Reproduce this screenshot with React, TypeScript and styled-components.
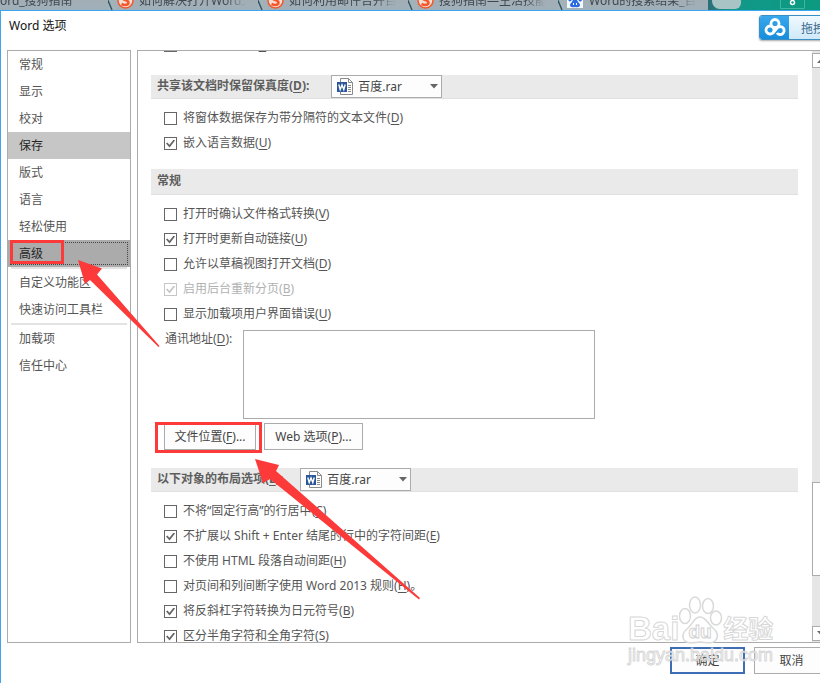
import React from "react";
import styled, { createGlobalStyle } from "styled-components";

const GlobalStyle = createGlobalStyle`
  * { box-sizing: border-box; }
  body {
    margin: 0;
    overflow: hidden;
    background: #fff;
  }
  body, button, select, textarea {
    font-family: "Noto Sans", "Noto Sans CJK SC", sans-serif;
    font-size: 12px;
    color: #555;
  }
  u { text-underline-offset: 2px; }
`;

const Screen = styled.div`
  position: relative;
  display: flex;
  flex-direction: column;
  height: 100vh;
  overflow: hidden;
`;

/* ---------- browser tabs behind the dialog ---------- */

const TabStrip = styled.div`
  display: flex;
  flex: none;
  height: 10px;
  overflow: hidden;
  background: linear-gradient(90deg, #2b6e78, #12988a 20%, #0b9a80);
  background-size: 112px 100%;
  background-position: right;
  background-repeat: no-repeat;
  background-color: #a3b1b9;
`;

const Tab = styled.div<{ $first?: boolean }>`
  display: flex;
  flex: none;
  align-items: flex-start;
  width: ${(p) => (p.$first ? 108 : 150)}px;
  height: 10px;
  background: linear-gradient(#a3aeb5, #9fb0ba);
`;

const TabTitle = styled.span<{ $first?: boolean }>`
  flex: 1;
  min-width: 0;
  height: 18px;
  margin: -8px ${(p) => (p.$first ? 0 : 12)}px 0 ${(p) => (p.$first ? -11 : 5)}px;
  overflow: hidden;
  line-height: 18px;
  white-space: nowrap;
  color: #3f484e;
  mask-image: linear-gradient(90deg, #000 80%, transparent);
`;

const TabIcon = styled.svg`
  flex: none;
  width: 17px;
  height: 17px;
  margin-top: -8px;
`;

const TabEdge = styled.svg`
  flex: none;
  width: 9px;
  height: 10px;
`;

const NewTab = styled.div`
  flex: none;
  width: 29px;
  height: 9px;
  margin-left: 4px;
  background: #a9c4c5;
  border-radius: 0 0 6px 8px;
`;

const Profile = styled.svg`
  flex: none;
  width: 25px;
  height: 9px;
  margin-left: 39px;
`;

/* ---------- dialog ---------- */

const Dialog = styled.main`
  position: relative;
  display: flex;
  flex: 1;
  flex-direction: column;
  width: calc(100% + 22px);
  min-height: 0;
  border-top: 1px solid #3ea6ee;
  border-left: 1px solid #3ea6ee;
  background: #fff;
`;

const TitleBar = styled.header`
  display: flex;
  flex: none;
  align-items: flex-start;
  justify-content: space-between;
  height: 39px;
  padding: 4px 0 0 8px;
`;

const Title = styled.h1`
  margin: 0;
  font-size: 12px;
  font-weight: 400;
  line-height: 21px;
  color: #111;
`;

const UploadButton = styled.button`
  display: flex;
  width: 83px;
  height: 25px;
  padding: 0;
  overflow: hidden;
  border: 1px solid #3a8fc4;
  border-radius: 3px;
  background: linear-gradient(#f0f9fe, #cfe9f9);
  box-shadow: 0 1px 2px #aaa;
  color: #39698c;
  line-height: 25px;
  white-space: nowrap;
`;

const UploadIcon = styled.svg`
  flex: none;
  width: 29px;
  height: 23px;
  margin-right: 12px;
  background: linear-gradient(#39a8ec, #168ddc);
`;

const Panels = styled.div`
  display: flex;
  flex: 1;
  gap: 6px;
  min-height: 0;
  padding: 0 11px 0 6px;
`;

const Sidebar = styled.nav`
  flex: none;
  width: 124px;
  border: 1px solid #ababab;
`;

const NavItem = styled.button<{ $state?: "hover" | "selected" }>`
  display: block;
  position: relative;
  width: 100%;
  height: 27px;
  padding: 0 0 0 11px;
  border: 0;
  background: ${(p) =>
    p.$state === "selected" ? "#ababab" : p.$state === "hover" ? "#c6c6c6" : "transparent"};
  color: ${(p) => (p.$state ? "#262626" : "#555")};
  line-height: 27px;
  text-align: left;
  white-space: nowrap;
  ${(p) => p.$state === "selected" && "outline: 1px dotted #444; outline-offset: -3px;"}
`;

const NavRule = styled.hr`
  height: 2px;
  margin: 0 3px;
  border: 0;
  background: #e3e3e3;
`;

const Pane = styled.section`
  display: flex;
  flex: 1;
  min-width: 0;
  border: 1px solid #ababab;
`;

const Viewport = styled.div`
  flex: 1;
  min-width: 0;
  overflow: hidden;
  padding: 0 14px 0 13px;
`;

const Scrolled = styled.div`
  margin-top: -18px;
`;

const SectionHead = styled.div<{ $tall?: boolean; $gap: number }>`
  display: flex;
  align-items: center;
  height: ${(p) => (p.$tall ? 26 : 24)}px;
  margin: ${(p) => p.$gap}px 0 7px;
  padding-left: 6px;
  border-bottom: 1px solid #e0e0e0;
  background: #eaeaea;
  color: #5e5e5e;
  font-weight: 700;
  line-height: 18px;
  white-space: nowrap;
`;

const HeadText = styled.label`
  padding-bottom: 2px;
`;

const Picker = styled.span<{ $space: number }>`
  position: relative;
  width: 111px;
  height: 23px;
  margin-left: ${(p) => p.$space}px;
`;

const Select = styled.select`
  appearance: none;
  width: 100%;
  height: 100%;
  padding: 0 20px 0 26px;
  border: 1px solid #ababab;
  border-radius: 0;
  background: #fdfdfd;
  color: #444;
`;

const DocIcon = styled.svg`
  position: absolute;
  top: 3px;
  left: 6px;
  width: 16px;
  height: 17px;
`;

const Caret = styled.svg`
  position: absolute;
  top: 9px;
  right: 4px;
  width: 8px;
  height: 5px;
`;

const Option = styled.label<{ $disabled?: boolean }>`
  display: flex;
  align-items: center;
  gap: 6px;
  height: 25px;
  padding-left: 13px;
  color: ${(p) => (p.$disabled ? "#b1b1b1" : "#555")};
  line-height: 18px;
  white-space: nowrap;
`;

const OptionText = styled.span`
  padding-bottom: 2px;
`;

const Box = styled.input`
  appearance: none;
  display: grid;
  place-items: center;
  width: 13px;
  height: 13px;
  margin: 0;
  border: 1px solid #666;
  background: #fff;
  &:disabled { border-color: #c6c6c6; }
  &:checked::after {
    content: "";
    width: 9px;
    height: 8px;
    background: #666;
    clip-path: polygon(0 50%, 15% 38%, 38% 65%, 85% 0, 100% 12%, 40% 100%);
  }
  &:disabled:checked::after { background: #c6c6c6; }
`;

const AddressRow = styled.div`
  display: flex;
  gap: 11px;
  padding: 3px 0 4px 14px;
`;

const AddressLabel = styled.label`
  line-height: 18px;
  white-space: nowrap;
`;

const Address = styled.textarea`
  width: 352px;
  height: 89px;
  border: 1px solid #ababab;
  background: #fff;
  resize: none;
`;

const ButtonRow = styled.div`
  display: flex;
  gap: 8px;
  padding-left: 13px;
`;

const Button = styled.button<{ $width: number; $primary?: boolean }>`
  position: relative;
  width: ${(p) => p.$width}px;
  height: 27px;
  padding: 0 0 1px;
  border: ${(p) => (p.$primary ? "2px solid #3d6db5" : "1px solid #ababab")};
  background: #fdfdfd;
  color: #444;
  white-space: nowrap;
`;

const ScrollBar = styled.div`
  display: flex;
  flex: none;
  flex-direction: column;
  width: 18px;
  padding: 2px 0 1px;
  background: #e6e6e6;
`;

const ScrollButton = styled.button`
  display: grid;
  place-items: center;
  flex: none;
  height: 15px;
  padding: 0;
  border: 1px solid #ababab;
  background: #fff;
`;

const Space = styled.div<{ $grow: number }>`
  flex: ${(p) => p.$grow};
`;

const Thumb = styled.div`
  flex: 92;
  border: 1px solid #ababab;
  background: #fff;
`;

const Footer = styled.footer`
  display: flex;
  flex: none;
  justify-content: flex-end;
  gap: 9px;
  height: 40px;
  padding: 4px 13px 0 0;
`;

/* ---------- annotations lying over the dialog ---------- */

const NavMark = styled.span`
  position: absolute;
  top: 0;
  left: 2px;
  width: 54px;
  height: 24px;
  border: 3px solid #fc3a3a;
`;

const ButtonMark = styled.span`
  position: absolute;
  top: -2px;
  left: -10px;
  width: 107px;
  height: 31px;
  border: 3px solid #fc3a3a;
`;

const Arrows = styled.svg`
  position: absolute;
  top: 0;
  left: 0;
  width: 430px;
  height: 610px;
  pointer-events: none;
`;

const Watermark = styled.div`
  position: absolute;
  right: 44px;
  bottom: 18px;
  width: 148px;
  color: rgba(255, 255, 255, 0.75);
  font-family: "Liberation Sans", "Noto Sans CJK SC", sans-serif;
  font-weight: 700;
  white-space: nowrap;
  -webkit-text-stroke: 1px rgba(205, 205, 205, 0.8);
  pointer-events: none;
`;

const Brand = styled.div`
  display: flex;
  align-items: flex-end;
  height: 50px;
  font-size: 33px;
  line-height: 34px;
`;

const BrandCn = styled.span`
  font-size: 25px;
`;

const Paw = styled.svg`
  flex: none;
  width: 44px;
  height: 50px;
`;

const Site = styled.div`
  font-size: 18px;
  font-weight: 400;
  line-height: 19px;
`;

const SogouIcon = () => (
  <TabIcon viewBox="0 0 17 17">
    <circle cx="8.500" cy="8.500" r="7.500" fill="#f5ded6" stroke="#f4572a" strokeWidth="1.500" />
    <path d="M12 5Q8 3 5.500 5.200Q5 7 8.500 8Q12.500 9.500 11 12Q8.500 14 4.500 12" fill="none" stroke="#f4572a" strokeWidth="2.600" />
  </TabIcon>
);

const PawIcon = () => (
  <TabIcon viewBox="0 0 17 17">
    <path fill="#f4f7fb" d="M0 0h16v16H0z" />
    <g fill="#2d6be0">
      <ellipse cx="3" cy="7" rx="1.800" ry="2.400" />
      <ellipse cx="6" cy="3.500" rx="1.800" ry="2.400" />
      <ellipse cx="10" cy="3.500" rx="1.800" ry="2.400" />
      <ellipse cx="13.200" cy="7.200" rx="1.800" ry="2.400" />
      <path d="M8 7Q10 7 11 10Q14 12 12.500 14.500Q11 15.800 8 15Q5 15.800 3.500 14.500Q2 12 5 10Q6 7 8 7Z" />
    </g>
    <path d="M6.500 11v2M9.500 11v2" stroke="#fff" />
  </TabIcon>
);

const Edge = () => (
  <TabEdge viewBox="0 0 9 10">
    <path fill="#a3b1b9" d="M0 0h9v10H0z" />
    <path d="M0 0L4 10" stroke="#d0dade" />
    <path d="M-1 -2L4 10" stroke="#2a5361" strokeWidth="1.400" />
  </TabEdge>
);

const tabs = [
  { title: "如何解决打开Word文" },
  { title: "如何利用邮件合并自" },
  { title: "搜狗指南—生活技能" },
  { title: "Word的搜索结果_百", paw: true },
];

type Nav = { text: string; state?: "hover" | "selected"; rule?: boolean };
const nav: Nav[] = [
  { text: "常规" },
  { text: "显示" },
  { text: "校对" },
  { text: "保存", state: "hover" },
  { text: "版式" },
  { text: "语言" },
  { text: "轻松使用" },
  { text: "高级", state: "selected", rule: true },
  { text: "自定义功能区" },
  { text: "快速访问工具栏", rule: true },
  { text: "加载项" },
  { text: "信任中心" },
];

type CheckProps = { text: string; k: string; tail?: string; on?: boolean; disabled?: boolean };
const Check = ({ text, k, tail, on, disabled }: CheckProps) => (
  <Option $disabled={disabled}>
    <Box type="checkbox" defaultChecked={on} disabled={disabled} />
    <OptionText>
      {text}(<u>{k}</u>){tail}
    </OptionText>
  </Option>
);

const DocPicker = ({ id, space }: { id: string; space: number }) => (
  <Picker $space={space}>
    <Select id={id} defaultValue="rar">
      <option value="rar">百度.rar</option>
    </Select>
    <DocIcon viewBox="0 0 16 17">
      <path d="M3.500 .5h8l4 4v12h-12z" fill="#fff" stroke="#8a8a8a" />
      <path d="M11.500 .5v4h4" fill="none" stroke="#8a8a8a" />
      <path d="M11 7.500h3M11 9.500h3M11 11.500h3M11 13.500h3" stroke="#8a8a8a" />
      <path d="M0 4h10v10H0z" fill="#2b579a" />
      <path d="M1.800 6.500L3.200 11.500L5 7L6.800 11.500L8.200 6.500" fill="none" stroke="#fff" strokeWidth="1.400" />
    </DocIcon>
    <Caret viewBox="0 0 8 5">
      <path d="M0 0h8L4 4.500z" fill="#666" />
    </Caret>
  </Picker>
);

export default function App() {
  return (
    <Screen>
      <GlobalStyle />
      <TabStrip>
        <Tab $first>
          <TabTitle $first>Word_搜狗指南</TabTitle>
        </Tab>
        {tabs.map((t) => (
          <Tab key={t.title}>
            <Edge />
            {t.paw ? <PawIcon /> : <SogouIcon />}
            <TabTitle>{t.title}</TabTitle>
          </Tab>
        ))}
        <NewTab />
        <Profile viewBox="0 0 25 9">
          <path d="M.5 0v8.500h24V0" fill="none" stroke="#3fb5a2" />
          <circle cx="12.500" cy="2.500" r="2" fill="none" stroke="#fff" strokeWidth="1.500" />
        </Profile>
      </TabStrip>

      <Dialog>
        <TitleBar>
          <Title>Word 选项</Title>
          <UploadButton>
            <UploadIcon viewBox="0 0 29 23">
              <g fill="none" stroke="#fff" strokeWidth="2.800">
                <circle cx="15" cy="7.500" r="4" />
                <circle cx="10" cy="14" r="4" />
                <path d="M12.500 17.500L17.500 11.500A4 4 0 1 1 17 17" />
              </g>
            </UploadIcon>
            拖拽上传
          </UploadButton>
        </TitleBar>

        <Panels>
          <Sidebar>
            {nav.map((n) => (
              <React.Fragment key={n.text}>
                <NavItem $state={n.state}>
                  {n.text}
                  {n.state === "selected" && <NavMark />}
                </NavItem>
                {n.rule && <NavRule />}
              </React.Fragment>
            ))}
          </Sidebar>

          <Pane>
            <Viewport>
              <Scrolled>
                <Check text="允许后台保存" k="A" on />
                <SectionHead $gap={17}>
                  <HeadText htmlFor="fidelity">
                    共享该文档时保留保真度(<u>D</u>):
                  </HeadText>
                  <DocPicker id="fidelity" space={22} />
                </SectionHead>
                <Check text="将窗体数据保存为带分隔符的文本文件" k="D" />
                <Check text="嵌入语言数据" k="U" on />

                <SectionHead $tall $gap={13}>
                  <HeadText as="span">常规</HeadText>
                </SectionHead>
                <Check text="打开时确认文件格式转换" k="V" />
                <Check text="打开时更新自动链接" k="U" on />
                <Check text="允许以草稿视图打开文档" k="D" />
                <Check text="启用后台重新分页" k="B" on disabled />
                <Check text="显示加载项用户界面错误" k="U" />
                <AddressRow>
                  <AddressLabel htmlFor="address">
                    通讯地址(<u>D</u>):
                  </AddressLabel>
                  <Address id="address" />
                </AddressRow>
                <ButtonRow>
                  <Button $width={92}>
                    文件位置(<u>F</u>)...
                    <ButtonMark />
                  </Button>
                  <Button $width={99}>
                    Web 选项(<u>P</u>)...
                  </Button>
                </ButtonRow>

                <SectionHead $gap={18}>
                  <HeadText htmlFor="layout">
                    以下对象的布局选项(<u>L</u>):
                  </HeadText>
                  <DocPicker id="layout" space={17} />
                </SectionHead>
                <Check text="不将“固定行高”的行居中" k="C" />
                <Check text="不扩展以 Shift + Enter 结尾的行中的字符间距" k="E" on />
                <Check text="不使用 HTML 段落自动间距" k="H" />
                <Check text="对页间和列间断字使用 Word 2013 规则" k="H" tail="。" />
                <Check text="将反斜杠字符转换为日元符号" k="B" on />
                <Check text="区分半角字符和全角字符" k="S" on />
              </Scrolled>
            </Viewport>
            <ScrollBar>
              <ScrollButton aria-label="向上滚动">
                <svg width="9" height="5">
                  <path d="M0 5L4.500 0L9 5z" fill="#666" />
                </svg>
              </ScrollButton>
              <Space $grow={415} />
              <Thumb />
              <Space $grow={50} />
              <ScrollButton aria-label="向下滚动">
                <svg width="9" height="5">
                  <path d="M0 0L4.500 5L9 0z" fill="#666" />
                </svg>
              </ScrollButton>
            </ScrollBar>
          </Pane>
        </Panels>

        <Footer>
          <Button $width={75} $primary>确定</Button>
          <Button $width={75}>取消</Button>
        </Footer>
      </Dialog>

      <Arrows viewBox="0 0 430 610">
        <g fill="#fc3a3a">
          <path d="M78 260L102 268.500L97 274.500L159.500 346L158.500 347L90 280L85 284z" />
          <path d="M255 459L279 465L276 471L420 598L419 599.500L270 479L263 483z" />
        </g>
      </Arrows>

      <Watermark>
        <Brand>
          <span>Bai</span>
          <Paw viewBox="0 0 44 50">
            <g fill="#fff" fillOpacity=".75" stroke="#d9d9d9" strokeWidth="1.500">
              <ellipse cx="6" cy="20" rx="5.500" ry="7.500" />
              <ellipse cx="16" cy="9" rx="5.500" ry="8" />
              <ellipse cx="29" cy="10" rx="5.500" ry="7.500" />
              <ellipse cx="37" cy="22" rx="5.500" ry="7" />
              <path d="M21 21C27 21 29 28 34 32C39 36 40 41 36 45Q33 48 21 46Q9 48 6 45C2 41 4 36 9 32C14 28 15 21 21 21Z" />
            </g>
            <text x="21" y="42" textAnchor="middle" fontSize="19" fill="#fff" stroke="#d2d2d2" strokeWidth="1">du</text>
          </Paw>
          <BrandCn>经验</BrandCn>
        </Brand>
        <Site>jingyan.baidu.com</Site>
      </Watermark>
    </Screen>
  );
}
